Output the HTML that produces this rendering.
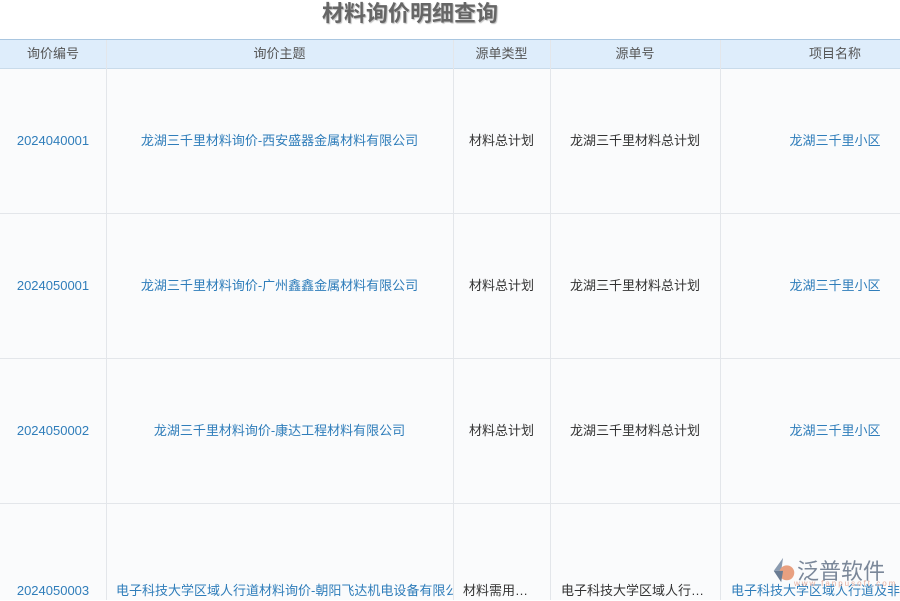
<!DOCTYPE html>
<html><head><meta charset="utf-8"><style>
body{margin:0;width:900px;height:600px;overflow:hidden;background:#fff;font-family:"Liberation Sans","Noto Sans CJK SC",sans-serif;position:relative}
.title{position:absolute;top:0;left:0;width:820px;text-align:center;font-size:22px;font-weight:bold;color:#666;line-height:28px;text-shadow:1px 1px 1px #bbb}
.hdr{position:absolute;top:39px;left:0;width:900px;height:28px;background:#deedfb;border-top:1px solid #a9c6e0;border-bottom:1px solid #c9dbea}
.c{position:absolute;font-size:13px;line-height:20px;height:20px;top:0;text-align:center;white-space:nowrap;overflow:hidden}
.h{color:#555;top:0;line-height:28px;height:28px}
.v{position:absolute;top:40px;width:1px;height:560px;background:#e3e6ea}
.r{position:absolute;left:0;width:900px;background:#fafbfc;border-bottom:1px solid #e3e6ea}
.b{color:#2f7dba}.k{color:#333}
.n{line-height:19px;padding-top:0}
</style></head><body>
<div class="title">材料询价明细查询</div>
<div class="r" style="top:69px;height:144px"></div>
<div class="r" style="top:214px;height:144px"></div>
<div class="r" style="top:359px;height:144px"></div>
<div class="r" style="top:504px;height:96px;border:0"></div>
<div class="hdr">
<div class="c h" style="left:0;width:106px">询价编号</div>
<div class="c h" style="left:106px;width:347px">询价主题</div>
<div class="c h" style="left:453px;width:97px">源单类型</div>
<div class="c h" style="left:550px;width:170px">源单号</div>
<div class="c h" style="left:720px;width:230px">项目名称</div>
</div>
<div class="v" style="left:106px"></div><div class="v" style="left:453px"></div><div class="v" style="left:550px"></div><div class="v" style="left:720px"></div>
<div style="position:absolute;top:131px;left:0;width:900px;height:20px">
<div class="c b n" style="left:0;width:106px">2024040001</div>
<div class="c b" style="left:106px;width:347px">龙湖三千里材料询价-西安盛器金属材料有限公司</div>
<div class="c k" style="left:453px;width:97px">材料总计划</div>
<div class="c k" style="left:550px;width:170px">龙湖三千里材料总计划</div>
<div class="c b" style="left:720px;width:230px">龙湖三千里小区</div></div>
<div style="position:absolute;top:276px;left:0;width:900px;height:20px">
<div class="c b n" style="left:0;width:106px">2024050001</div>
<div class="c b" style="left:106px;width:347px">龙湖三千里材料询价-广州鑫鑫金属材料有限公司</div>
<div class="c k" style="left:453px;width:97px">材料总计划</div>
<div class="c k" style="left:550px;width:170px">龙湖三千里材料总计划</div>
<div class="c b" style="left:720px;width:230px">龙湖三千里小区</div></div>
<div style="position:absolute;top:421px;left:0;width:900px;height:20px">
<div class="c b n" style="left:0;width:106px">2024050002</div>
<div class="c b" style="left:106px;width:347px">龙湖三千里材料询价-康达工程材料有限公司</div>
<div class="c k" style="left:453px;width:97px">材料总计划</div>
<div class="c k" style="left:550px;width:170px">龙湖三千里材料总计划</div>
<div class="c b" style="left:720px;width:230px">龙湖三千里小区</div></div>
<div style="position:absolute;top:581px;left:0;width:900px;height:20px">
<div class="c b n" style="left:0;width:106px">2024050003</div>
<div class="c b" style="left:116px;width:337px;text-align:left">电子科技大学区域人行道材料询价-朝阳飞达机电设备有限公司</div>
<div class="c k" style="left:463px;width:87px;text-align:left">材料需用…</div>
<div class="c k" style="left:561px;width:159px;text-align:left">电子科技大学区域人行…</div>
<div class="c b" style="left:731px;width:169px;text-align:left">电子科技大学区域人行道及非</div></div>
<div style="position:absolute;left:770px;top:552px;width:130px;height:36px">
<svg width="28" height="28" viewBox="0 0 30 30" style="position:absolute;left:0;top:4px"><path d="M14 2 L4 16 L12 16 Z" fill="#8a9bb0"/><circle cx="18" cy="18" r="8" fill="#e8a080"/><path d="M4 16 L12 28 L14 16Z" fill="#6a7c93"/></svg>
<div style="position:absolute;left:27px;top:2px;font-size:22px;color:#7a8799;letter-spacing:0px">泛普软件</div>
<div style="position:absolute;left:24px;top:27px;font-size:8px;color:#e8b0a0;letter-spacing:2px">www.fanpusoft.com</div>
</div>
</body></html>
